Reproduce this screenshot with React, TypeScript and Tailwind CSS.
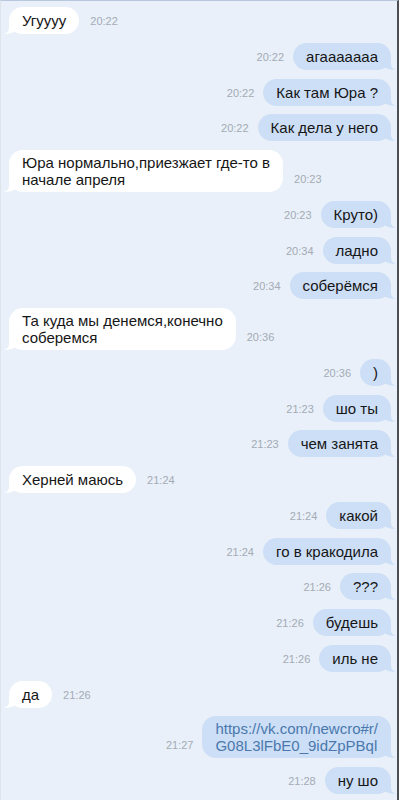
type Msg = {
  side: "in" | "out";
  lines: string[];
  time: string;
  link?: boolean;
};

const messages: Msg[] = [
  { side: "in", lines: ["Угуууу"], time: "20:22" },
  { side: "out", lines: ["агааааааа"], time: "20:22" },
  { side: "out", lines: ["Как там Юра ?"], time: "20:22" },
  { side: "out", lines: ["Как дела у него"], time: "20:22" },
  { side: "in", lines: ["Юра нормально,приезжает где-то в", "начале апреля"], time: "20:23" },
  { side: "out", lines: ["Круто)"], time: "20:23" },
  { side: "out", lines: ["ладно"], time: "20:34" },
  { side: "out", lines: ["соберёмся"], time: "20:34" },
  { side: "in", lines: ["Та куда мы денемся,конечно", "соберемся"], time: "20:36" },
  { side: "out", lines: [")"], time: "20:36" },
  { side: "out", lines: ["шо ты"], time: "21:23" },
  { side: "out", lines: ["чем занята"], time: "21:23" },
  { side: "in", lines: ["Херней маюсь"], time: "21:24" },
  { side: "out", lines: ["какой"], time: "21:24" },
  { side: "out", lines: ["го в кракодила"], time: "21:24" },
  { side: "out", lines: ["???"], time: "21:26" },
  { side: "out", lines: ["будешь"], time: "21:26" },
  { side: "out", lines: ["иль не"], time: "21:26" },
  { side: "in", lines: ["да"], time: "21:26" },
  {
    side: "out",
    lines: ["https://vk.com/newcro#r/", "G08L3lFbE0_9idZpPBql"],
    time: "21:27",
    link: true,
  },
  { side: "out", lines: ["ну шо"], time: "21:28" },
];

// small curled tail at the bottom corner of a bubble
function Tail({ side }: { side: "in" | "out" }) {
  if (side === "in") {
    return (
      <svg
        className="absolute left-[-5px] bottom-0"
        width="14"
        height="12"
        viewBox="0 0 14 12"
      >
        <path d="M5 0 L5 6 C5 9 3 11 0 12 C5 12 9 11 12 9 L14 0 Z" fill="#ffffff" />
      </svg>
    );
  }
  return (
    <svg
      className="absolute right-[-5px] bottom-0"
      width="14"
      height="12"
      viewBox="0 0 14 12"
    >
      <path d="M9 0 L9 6 C9 9 11 11 14 12 C9 12 5 11 2 9 L0 0 Z" fill="#cddff6" />
    </svg>
  );
}

function Row({ m }: { m: Msg }) {
  const multi = m.lines.length > 1;
  const time = (
    <span className="pb-[6px] text-[11px] leading-[13px] text-[#a3abb5]">{m.time}</span>
  );
  const bubble = (
    <div
      className={
        (m.side === "in" ? "bg-white " : "bg-[#cddff6] ") +
        (multi ? "py-[4px] " : "py-[5px] ") +
        "relative rounded-[14px] px-[13px]"
      }
    >
      <Tail side={m.side} />
      <div
        className={
          m.link
            ? "relative whitespace-nowrap text-[15px] leading-[17px] text-[#4a78ad]"
            : "relative whitespace-nowrap text-[15px] leading-[17px] text-[#161616]"
        }
      >
        {m.lines.map((l, i) => (
          <div key={i}>{l}</div>
        ))}
      </div>
    </div>
  );

  if (m.side === "in") {
    return (
      <div className="flex items-end justify-start gap-[11px] pl-[8px]">
        {bubble}
        {time}
      </div>
    );
  }
  return (
    <div className="flex items-end justify-end gap-[9px] pr-[6px]">
      {time}
      {bubble}
    </div>
  );
}

export default function App() {
  return (
    <div
      className="flex h-[800px] w-[402px] overflow-hidden bg-white"
      style={{ fontFamily: '"Liberation Sans", Arial, sans-serif' }}
    >
      <main className="flex h-full w-[399px] flex-col gap-[8.75px] overflow-hidden border-t border-l border-r-2 border-t-[#b7c7dc] border-l-[#dfe4ea] border-r-[#4b4f55] bg-[#e9f0f9] pt-[6px]">
        {messages.map((m, i) => (
          <Row key={i} m={m} />
        ))}
      </main>
    </div>
  );
}
